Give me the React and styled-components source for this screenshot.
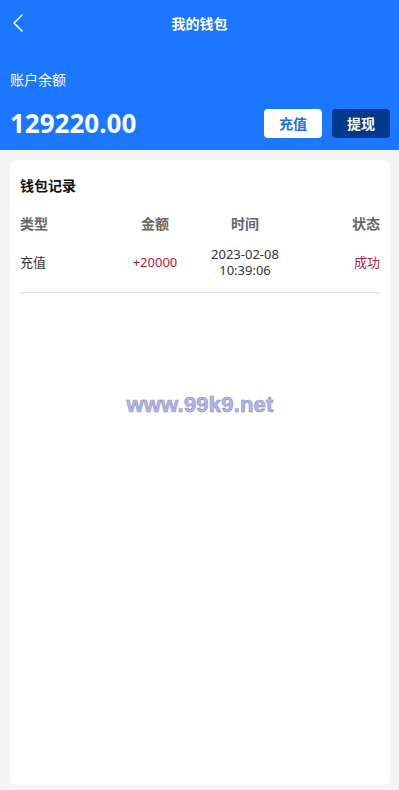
import React from 'react';
import styled, { createGlobalStyle } from 'styled-components';

const GlobalStyle = createGlobalStyle`
  html, body {
    margin: 0;
    padding: 0;
    background: #f4f4f4;
    font-family: 'Noto Sans', 'Noto Sans CJK SC', sans-serif;
  }
`;

const Page = styled.div`
  width: 399px;
  height: 790px;
  display: flex;
  flex-direction: column;
  background: #f4f4f4;
  overflow: hidden;
`;

const Header = styled.div`
  height: 150px;
  background: #1b77ff;
  color: #fff;
  display: flex;
  flex-direction: column;
  box-sizing: border-box;
`;

const NavBar = styled.div`
  height: 46px;
  display: flex;
  align-items: center;
  position: relative;
  justify-content: center;
`;

const BackButton = styled.div`
  position: absolute;
  left: 8px;
  top: 12px;
  width: 20px;
  height: 22px;
  display: flex;
  align-items: center;
  justify-content: center;
`;

const Title = styled.div`
  font-size: 14px;
  font-weight: 700;
`;

const BalanceLabel = styled.div`
  margin-top: 24px;
  padding: 0 10px;
  font-size: 14px;
  line-height: 20px;
`;

const BalanceRow = styled.div`
  margin-top: 18px;
  padding: 0 9px 0 10px;
  display: flex;
  align-items: center;
  justify-content: space-between;
`;

const Amount = styled.div`
  font-size: 26px;
  font-weight: 700;
  line-height: 30px;
`;

const Actions = styled.div`
  display: flex;
  gap: 10px;
`;

const ActionButton = styled.div`
  width: 58px;
  height: 29px;
  border-radius: 4px;
  display: flex;
  align-items: center;
  justify-content: center;
  font-size: 14px;
  font-weight: 700;
  background: ${p => (p.primary ? '#003a8c' : '#fff')};
  color: ${p => (p.primary ? '#fff' : '#1b6fe8')};
`;

const Card = styled.div`
  margin: 10px 9px 5px 10px;
  flex: 1;
  background: #fff;
  border-radius: 6px;
  padding: 0 10px;
  position: relative;
`;

const CardTitle = styled.div`
  padding-top: 16px;
  font-size: 14px;
  font-weight: 700;
  color: #111;
  line-height: 20px;
`;

const Row = styled.div`
  display: grid;
  grid-template-columns: repeat(4, 1fr);
  align-items: center;
  font-size: ${p => (p.head ? '14px' : '13px')};
  font-weight: ${p => (p.head ? 700 : 400)};
  color: ${p => (p.head ? '#666' : '#333')};
  min-height: ${p => (p.head ? '20px' : '32px')};
  margin-top: ${p => (p.head ? '18px' : '12px')};
  line-height: 16px;
  padding-bottom: ${p => (p.head ? '0' : '14px')};
  border-bottom: ${p => (p.head ? 'none' : '1px solid #e0e0e0')};
`;

const Cell = styled.div`
  text-align: ${p => p.align || 'left'};
  color: ${p => (p.red ? '#b8202e' : 'inherit')};
`;

const Watermark = styled.div`
  position: absolute;
  left: 0;
  right: 0;
  top: 232px;
  text-align: center;
  font-family: 'Liberation Sans', Arial, sans-serif;
  font-size: 22px;
  font-weight: 700;
  color: #b6b6e6;
  -webkit-text-stroke: 0.6px #8a8acc;
  letter-spacing: 0.2px;
`;

const records = [
  { type: '充值', amount: '+20000', date: '2023-02-08', time: '10:39:06', status: '成功' },
];

export default function App() {
  return (
    <Page>
      <GlobalStyle />
      <Header>
        <NavBar>
          <BackButton>
            <svg width="12" height="20" viewBox="0 0 12 20" fill="none">
              <path d="M10 2 L2 10 L10 18" stroke="#fff" strokeWidth="1.6" strokeLinecap="round" strokeLinejoin="round" />
            </svg>
          </BackButton>
          <Title>我的钱包</Title>
        </NavBar>
        <BalanceLabel>账户余额</BalanceLabel>
        <BalanceRow>
          <Amount>129220.00</Amount>
          <Actions>
            <ActionButton>充值</ActionButton>
            <ActionButton primary>提现</ActionButton>
          </Actions>
        </BalanceRow>
      </Header>
      <Card>
        <CardTitle>钱包记录</CardTitle>
        <Row head>
          <Cell>类型</Cell>
          <Cell align="center">金额</Cell>
          <Cell align="center">时间</Cell>
          <Cell align="right">状态</Cell>
        </Row>
        {records.map((r, i) => (
          <Row key={i}>
            <Cell>{r.type}</Cell>
            <Cell align="center" red>{r.amount}</Cell>
            <Cell align="center">{r.date}<br />{r.time}</Cell>
            <Cell align="right" red>{r.status}</Cell>
          </Row>
        ))}
        <Watermark>www.99k9.net</Watermark>
      </Card>
    </Page>
  );
}
